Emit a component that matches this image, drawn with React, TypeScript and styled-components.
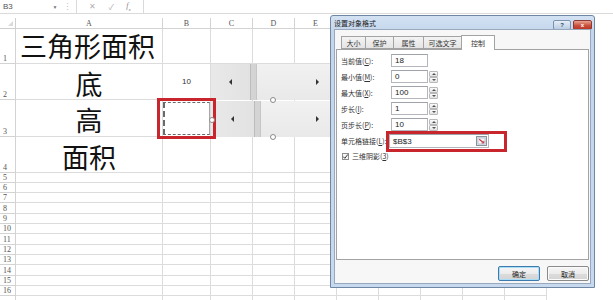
import styled, { createGlobalStyle } from "styled-components";

const GlobalStyle = createGlobalStyle`
  html, body {
    margin: 0;
    padding: 0;
    background: #fff;
  }
  body {
    font-family: "Liberation Sans", "Noto Sans CJK SC", sans-serif;
  }
`;

const CJK = `"Noto Sans CJK SC", "Liberation Sans", sans-serif`;

// columns F and on sit under the dialog, so their letters are never seen
const COLS = [
  { label: "", width: 16 },
  { label: "A", width: 147 },
  { label: "B", width: 48 },
  { label: "C", width: 42 },
  { label: "D", width: 42 },
  { label: "E", width: 42 },
  { label: "", width: 42 },
  { label: "", width: 42 },
  { label: "", width: 42 },
  { label: "", width: 42 },
  { label: "", width: 42 },
];

const ROWS = [35, 36, 37, 36, 10, 10, 10, 11, 10, 10, 11, 10, 10, 11, 10, 10, 10];
const VISIBLE_ROW_LABELS = 16;

type CellData = { text: string; align: "left" | "center"; big?: boolean; pb?: number };

const CELLS: Record<string, CellData> = {
  "1-1": { text: "三角形面积", align: "left", big: true, pb: 3 },
  "1-2": { text: "底", align: "center", big: true, pb: 1 },
  "1-3": { text: "高", align: "center", big: true, pb: 2 },
  "1-4": { text: "面积", align: "center", big: true, pb: 1 },
  "2-2": { text: "10", align: "center" },
};

function App() {
  return (
    <Page>
      <GlobalStyle />
      <FormulaBar>
        <NameBox>B3</NameBox>
        <NameArrow>▼</NameArrow>
        <Grip>⋮</Grip>
        <FxTools>
          <span>✕</span>
          <span>✓</span>
          <FxLabel>
            f<sub>x</sub>
          </FxLabel>
        </FxTools>
        <FormulaInput />
      </FormulaBar>

      <Sheet>
        {COLS.map((c, i) =>
          i === 0 ? <Corner key="corner" /> : <ColHead key={`h${i}`}>{c.label}</ColHead>
        )}
        {ROWS.map((_, r) =>
          COLS.map((_c, i) => {
            if (i === 0)
              return <RowHead key={`r${r}`}>{r < VISIBLE_ROW_LABELS ? r + 1 : ""}</RowHead>;
            const data = CELLS[`${i}-${r + 1}`];
            return (
              <Cell
                key={`${i}-${r}`}
                $align={data?.align ?? "left"}
                $big={data?.big}
                $pb={data?.pb ?? 0}
              >
                {data?.text}
              </Cell>
            );
          })
        )}
      </Sheet>

      <ScrollCtl $top={64}>
        <ScrollBtn>
          <Arrow $dir="left" />
        </ScrollBtn>
        <Thumb />
        <Track />
        <ScrollBtnEnd>
          <Arrow $dir="right" />
        </ScrollBtnEnd>
      </ScrollCtl>
      <ScrollCtl $top={101}>
        <ScrollBtn $wide>
          <Arrow $dir="left" />
        </ScrollBtn>
        <Thumb />
        <Track />
        <ScrollBtnEnd>
          <Arrow $dir="right" />
        </ScrollBtnEnd>
      </ScrollCtl>
      <Handle $x={270} $y={97} />
      <Handle $x={270} $y={134} />

      <RedFrame>
        <Marquee />
        <Handle $x={49} $y={16} />
      </RedFrame>

      <Dialog>
        <TitleBar>
          <TitleText>设置对象格式</TitleText>
          <CaptionBtns>
            <HelpBtn>?</HelpBtn>
            <CloseBtn>x</CloseBtn>
          </CaptionBtns>
        </TitleBar>
        <Client>
          <Tabs>
            <Tab $w={25}>大小</Tab>
            <Tab $w={29}>保护</Tab>
            <Tab $w={31}>属性</Tab>
            <Tab $w={39}>可选文字</Tab>
            <Tab $w={34} $active>
              控制
            </Tab>
          </Tabs>
          <Panel>
            <FieldRow>
              <Label>
                当前值(<u>C</u>):
              </Label>
              <Input>18</Input>
            </FieldRow>
            <FieldRow>
              <Label>
                最小值(<u>M</u>):
              </Label>
              <Input>0</Input>
              <Spinner />
            </FieldRow>
            <FieldRow>
              <Label>
                最大值(<u>X</u>):
              </Label>
              <Input>100</Input>
              <Spinner />
            </FieldRow>
            <FieldRow>
              <Label>
                步长(<u>I</u>):
              </Label>
              <Input>1</Input>
              <Spinner />
            </FieldRow>
            <FieldRow>
              <Label>
                页步长(<u>P</u>):
              </Label>
              <Input>10</Input>
              <Spinner />
            </FieldRow>
            <LinkRow>
              <Label $w={48}>
                单元格链接(<u>L</u>):
              </Label>
              <LinkField>
                <span>$B$3</span>
                <Picker>
                  <svg width="11" height="10" viewBox="0 0 11 10">
                    <rect x="0.5" y="0.5" width="10" height="9" fill="#dfe4ea" stroke="#8a939d" />
                    <rect x="2" y="2" width="7" height="6" fill="#f4f6f8" stroke="#a2acb6" strokeWidth="0.6" />
                    <path d="M3.2 3.2 L7.6 6.8" stroke="#c23a44" strokeWidth="1.1" />
                    <path d="M5.6 7 L7.8 7 L7.8 4.9" stroke="#c23a44" strokeWidth="0.9" fill="none" />
                  </svg>
                </Picker>
                <LinkHighlight />
              </LinkField>
            </LinkRow>
            <CheckRow>
              <CheckBox>
                <svg width="7" height="7" viewBox="0 0 7 7">
                  <path d="M1.2 3.6 L2.8 5.3 L5.9 1.4" stroke="#333" strokeWidth="1" fill="none" />
                </svg>
              </CheckBox>
              <span>
                三维阴影(<u>3</u>)
              </span>
            </CheckRow>
          </Panel>
          <ButtonRow>
            <DlgButton $default>确定</DlgButton>
            <DlgButton>取消</DlgButton>
          </ButtonRow>
        </Client>
      </Dialog>
    </Page>
  );
}

function Spinner() {
  return (
    <Spin>
      <SpinBtn $up />
      <SpinBtn />
    </Spin>
  );
}

export default App;

const Page = styled.div`
  position: relative;
  width: 613px;
  height: 300px;
  overflow: hidden;
  background: #fff;
`;

const FormulaBar = styled.div`
  display: flex;
  height: 14px;
  box-sizing: border-box;
  border-bottom: 1px solid #dadada;
  margin-bottom: 4px;
  font-size: 8px;
  color: #555;
`;

const NameBox = styled.div`
  width: 50px;
  display: flex;
  align-items: center;
  padding-left: 3px;
  box-sizing: border-box;
`;

const NameArrow = styled.div`
  width: 10px;
  display: flex;
  align-items: center;
  justify-content: center;
  font-size: 5px;
  color: #777;
`;

const Grip = styled.div`
  width: 16px;
  display: flex;
  align-items: center;
  padding-left: 3px;
  box-sizing: border-box;
  color: #c4c4c4;
  font-size: 9px;
`;

const FxTools = styled.div`
  width: 66px;
  display: flex;
  align-items: center;
  justify-content: space-evenly;
  border-left: 1px solid #dadada;
  border-right: 1px solid #dadada;
  color: #b0b0b0;
  font-size: 8px;
`;

const FxLabel = styled.span`
  font-family: "Liberation Serif", serif;
  font-style: italic;
  color: #888;
  sub {
    font-size: 5px;
  }
`;

const FormulaInput = styled.div`
  flex: 1;
`;

const Sheet = styled.div`
  display: grid;
  grid-template-columns: ${COLS.map((c) => `${c.width}px`).join(" ")};
  grid-template-rows: 11px ${ROWS.map((h) => `${h}px`).join(" ")};
`;

const GridCell = styled.div`
  box-sizing: border-box;
  border-right: 1px solid #dcdcdc;
  border-bottom: 1px solid #dcdcdc;
  white-space: nowrap;
`;

const Corner = styled(GridCell)`
  position: relative;
  border-color: #cfcfcf;
  &::after {
    content: "";
    position: absolute;
    right: 2px;
    bottom: 2px;
    border-left: 5px solid transparent;
    border-bottom: 5px solid #dadada;
  }
`;

const ColHead = styled(GridCell)`
  display: flex;
  align-items: center;
  justify-content: center;
  font-family: "Liberation Serif", serif;
  font-size: 8px;
  color: #555;
  border-color: #d3d3d3;
`;

const RowHead = styled(GridCell)`
  display: flex;
  align-items: flex-end;
  padding-left: 3px;
  font-family: "Liberation Serif", serif;
  font-size: 8px;
  line-height: 9px;
  color: #555;
  border-color: #d3d3d3;
`;

const Cell = styled(GridCell)<{ $align: "left" | "center"; $big?: boolean; $pb: number }>`
  display: flex;
  align-items: ${(p) => (p.$big ? "flex-end" : "center")};
  justify-content: ${(p) => (p.$align === "center" ? "center" : "flex-start")};
  padding: 0 0 ${(p) => p.$pb}px ${(p) => (p.$align === "left" ? 4 : 0)}px;
  font-family: ${(p) => (p.$big ? CJK : `"Liberation Sans", sans-serif`)};
  font-size: ${(p) => (p.$big ? 27 : 8)}px;
  line-height: ${(p) => (p.$big ? "28px" : 1)};
  color: ${(p) => (p.$big ? "#111" : "#333")};
`;

const ScrollCtl = styled.div<{ $top: number }>`
  position: absolute;
  left: 211px;
  top: ${(p) => p.$top}px;
  width: 125px;
  height: 36px;
  display: flex;
`;

const ScrollBtn = styled.div<{ $wide?: boolean }>`
  width: ${(p) => (p.$wide ? 43 : 39)}px;
  display: flex;
  align-items: center;
  justify-content: center;
  background: linear-gradient(90deg, #e9e9e9, #e2e2e2);
`;

const Thumb = styled.div`
  width: 5px;
  background: #d4d4d4;
  border-left: 1px solid #bcbcbc;
  border-right: 1px solid #c6c6c6;
`;

const Track = styled.div`
  flex: 1;
  background: linear-gradient(180deg, #f1f1f1, #e9e9e9);
`;

const ScrollBtnEnd = styled.div`
  width: 38px;
  display: flex;
  align-items: center;
  justify-content: center;
  background: linear-gradient(180deg, #f1f1f1, #e9e9e9);
`;

const Arrow = styled.div<{ $dir: "left" | "right" }>`
  width: 0;
  height: 0;
  border-top: 3px solid transparent;
  border-bottom: 3px solid transparent;
  ${(p) =>
    p.$dir === "left" ? "border-right: 3px solid #333;" : "border-left: 3px solid #333;"}
`;

const Handle = styled.div<{ $x: number; $y: number }>`
  position: absolute;
  left: ${(p) => p.$x}px;
  top: ${(p) => p.$y}px;
  width: 4px;
  height: 4px;
  border-radius: 50%;
  background: #fff;
  border: 1px solid #8a8a8a;
  z-index: 2;
`;

const RedFrame = styled.div`
  position: absolute;
  left: 157px;
  top: 98px;
  width: 59px;
  height: 41px;
  box-sizing: border-box;
  border: 3px solid #c9252d;
`;

const Marquee = styled.div`
  position: absolute;
  left: 3px;
  top: 1px;
  right: 3px;
  bottom: 1px;
  border: 1px dashed #6a6a6a;
  border-right: 1px solid #a8a8a8;
  border-left-width: 2px;
`;

const Dialog = styled.div`
  position: absolute;
  left: 330px;
  top: 15px;
  width: 265px;
  height: 273px;
  box-sizing: border-box;
  display: flex;
  flex-direction: column;
  border: 1px solid #6f87a2;
  border-radius: 3px 3px 0 0;
  background: linear-gradient(180deg, #d3e2f3 0px, #c4d6ec 16px, #c7d9ee 100%);
  padding: 0 3px 3px;
  font-family: ${CJK};
  font-size: 7px;
  color: #222;
  z-index: 5;
`;

const TitleBar = styled.div`
  height: 13px;
  display: flex;
  align-items: flex-start;
  justify-content: space-between;
`;

const TitleText = styled.div`
  padding-top: 3px;
  line-height: 8px;
`;

const CaptionBtns = styled.div`
  display: flex;
  gap: 2px;
  padding-top: 4px;
  margin-right: -1px;
`;

const HelpBtn = styled.div`
  width: 16px;
  height: 8px;
  border: 1px solid #7b93ae;
  border-radius: 2px;
  background: linear-gradient(180deg, #e6eef8, #b9cce3);
  color: #2c4462;
  font-family: "Liberation Sans", sans-serif;
  font-size: 6px;
  font-weight: bold;
  line-height: 8px;
  text-align: center;
  box-sizing: content-box;
`;

const CloseBtn = styled(HelpBtn)`
  width: 17px;
  border-color: #8d3b32;
  background: linear-gradient(180deg, #e8a493, #c94b38 60%, #b93a28);
  color: #fff;
`;

const Client = styled.div`
  flex: 1;
  display: flex;
  flex-direction: column;
  background: #f7f7f7;
  border: 1px solid #98a9bd;
  padding: 6px 1px 1px;
  min-height: 0;
`;

const Tabs = styled.div`
  display: flex;
  align-items: flex-end;
  height: 13px;
  padding-left: 6px;
  position: relative;
  z-index: 1;
`;

const Tab = styled.div<{ $w: number; $active?: boolean }>`
  width: ${(p) => p.$w}px;
  height: ${(p) => (p.$active ? 15 : 13)}px;
  margin-bottom: ${(p) => (p.$active ? -1 : 0)}px;
  box-sizing: border-box;
  display: flex;
  align-items: center;
  justify-content: center;
  border: 1px solid #a3a3a3;
  border-bottom: ${(p) => (p.$active ? "none" : "1px solid #a3a3a3")};
  margin-left: -1px;
  background: ${(p) => (p.$active ? "#fff" : "linear-gradient(180deg, #f4f4f4, #e4e4e4)")};
  color: #333;
`;

const Panel = styled.div`
  flex: 1;
  background: #fff;
  border: 1px solid #a3a3a3;
  padding: 4px 0 0 4px;
  display: flex;
  flex-direction: column;
  gap: 3px;
`;

const FieldRow = styled.div`
  display: flex;
  align-items: center;
  height: 13px;
`;

const Label = styled.div<{ $w?: number }>`
  width: ${(p) => p.$w ?? 50}px;
  white-space: nowrap;
  color: #333;
  u {
    text-underline-offset: 1px;
  }
`;

const Input = styled.div`
  width: 37px;
  height: 13px;
  box-sizing: border-box;
  border: 1px solid #b3b6bd;
  border-top-color: #9ea3aa;
  padding-left: 3px;
  display: flex;
  align-items: center;
  font-family: "Liberation Sans", sans-serif;
  font-size: 8px;
  color: #222;
`;

const Spin = styled.div`
  display: flex;
  flex-direction: column;
  width: 9px;
  height: 12px;
  margin-left: 1px;
`;

const SpinBtn = styled.div<{ $up?: boolean }>`
  flex: 1;
  box-sizing: border-box;
  border: 1px solid #b9b9b9;
  border-radius: 1px;
  background: linear-gradient(180deg, #fbfbfb, #e3e3e3);
  display: flex;
  align-items: center;
  justify-content: center;
  &::after {
    content: "";
    border-left: 2px solid transparent;
    border-right: 2px solid transparent;
    ${(p) => (p.$up ? "border-bottom: 2px solid #555;" : "border-top: 2px solid #555;")}
  }
`;

const LinkRow = styled(FieldRow)`
  height: 14px;
`;

const LinkField = styled(Input)`
  position: relative;
  width: 100px;
  height: 14px;
  justify-content: space-between;
  padding-right: 1px;
`;

const Picker = styled.div`
  display: flex;
  align-items: center;
`;

const LinkHighlight = styled.div`
  position: absolute;
  left: -4px;
  top: -4px;
  right: -19px;
  bottom: -5px;
  border: 3px solid #c9252d;
`;

const CheckRow = styled.div`
  display: flex;
  align-items: center;
  gap: 3px;
  height: 10px;
  padding-left: 1px;
  color: #333;
`;

const CheckBox = styled.div`
  width: 7px;
  height: 7px;
  box-sizing: border-box;
  border: 1px solid #8e8f8f;
  background: #f6f6f6;
  display: flex;
  align-items: center;
  justify-content: center;
  svg {
    flex: none;
  }
`;

const ButtonRow = styled.div`
  display: flex;
  justify-content: flex-end;
  gap: 7px;
  height: 15px;
  margin-top: 6px;
  margin-bottom: 1px;
`;

const DlgButton = styled.div<{ $default?: boolean }>`
  width: 42px;
  box-sizing: border-box;
  display: flex;
  align-items: center;
  justify-content: center;
  border: 1px solid ${(p) => (p.$default ? "#3d7bad" : "#8a8a8a")};
  border-radius: 2px;
  background: linear-gradient(180deg, #f6f6f6 0%, #ececec 50%, #dcdcdc 51%, #d4d4d4 100%);
  box-shadow: inset 0 0 0 1px ${(p) => (p.$default ? "#a9dcf6" : "#fbfbfb")};
  color: #222;
`;
